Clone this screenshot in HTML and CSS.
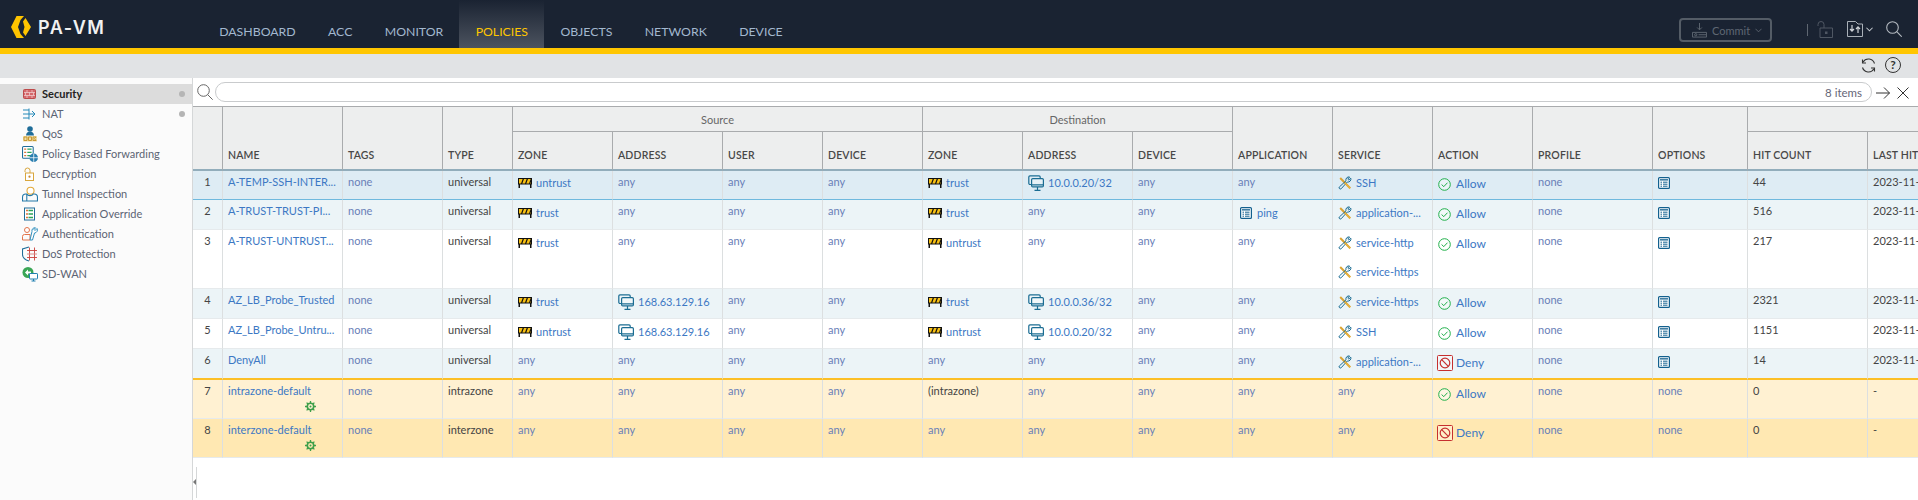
FILE: index.html
```html
<!DOCTYPE html>
<html>
<head>
    <title>PA-VM Policies</title>
    <link rel="stylesheet" href="styles.css">
</head>
<body>
    <svg class="defs" width="0" height="0">
        <defs>
            <symbol id="i-zone" viewBox="0 0 14 10">
                <rect x="0" y="0" width="14" height="6.500" fill="#111"/>
                <rect x="1" y="1" width="12" height="4.500" fill="#f8c013"/>
                <path d="M3.500 6l2-5.500M7.500 6l2-5.500M11.500 6l2-5.500" stroke="#111" stroke-width="1.200" fill="none"/>
                <path d="M.5 6h1.500v4H.5zM12 6h1.500v4H12z" fill="#111"/>
            </symbol>
            <symbol id="i-addr" viewBox="0 0 16 16">
                <g fill="none" stroke="#1b6d93" stroke-width="1.200">
                    <path d="M3.500 9.500H2a1.200 1.200 0 0 1-1.200-1.200V2A1.200 1.200 0 0 1 2 .8h9A1.200 1.200 0 0 1 12.200 2v1.500"/>
                    <rect x="3.600" y="3.600" width="11.800" height="8.300" rx="1.200" fill="#fff" fill-opacity=".25"/>
                    <path d="M3.600 9.800h11.800M9.500 12v3M6.500 15.300h6"/>
                </g>
            </symbol>
            <symbol id="i-list" viewBox="0 0 12 12">
                <rect x=".6" y=".6" width="10.800" height="10.800" rx="1" fill="#fff" stroke="#12608e" stroke-width="1.200"/>
                <path d="M2 2.200h8v1.300H2z" fill="#12608e"/>
                <path d="M2.500 5.200h1.500M5 5.200h4.500M2.500 7.200h1.500M5 7.200h4.500M2.500 9.200h1.500M5 9.200h4.500" stroke="#12608e" fill="none"/>
            </symbol>
            <symbol id="i-tool" viewBox="0 0 14 14">
                <path d="M2.200 2l10 10.300" stroke="#d9a332" stroke-width="2" fill="none"/>
                <path d="M12.800 2.200l-2 1.800-1-.9L11.600 1A3 3 0 0 0 8 4.800L1.300 11a1.300 1.300 0 0 0 1.800 1.800L9.300 6a3 3 0 0 0 3.500-3.800z" fill="none" stroke="#1b6d93" stroke-width="1"/>
                <path d="M7 7l5.200 5.300" stroke="#e8b23e" stroke-width="1.600" fill="none"/>
            </symbol>
            <symbol id="i-allow" viewBox="0 0 13 13">
                <circle cx="6.500" cy="6.500" r="5.800" fill="#fff" fill-opacity=".4" stroke="#21b04b" stroke-width="1"/>
                <path d="M3.700 6.500l2 2.200 3.800-4" fill="none" stroke="#21b04b" stroke-width="1"/>
            </symbol>
            <symbol id="i-deny" viewBox="0 0 16 16">
                <rect x=".5" y=".5" width="15" height="15" rx="1" fill="#fff" fill-opacity=".3" stroke="#c62f2f"/>
                <circle cx="8" cy="8" r="4.800" fill="none" stroke="#c62f2f" stroke-width="1.200"/>
                <path d="M4.700 4.700l6.600 6.600" stroke="#c62f2f" stroke-width="1.200"/>
            </symbol>
            <symbol id="i-gear" viewBox="0 0 11 11">
                <circle cx="5.500" cy="5.500" r="3.200" fill="none" stroke="#3e9f4a" stroke-width="1.600"/>
                <circle cx="5.500" cy="5.500" r="1" fill="#3e9f4a"/>
                <path d="M5.500 0v2M5.500 9v2M0 5.500h2M9 5.500h2M1.600 1.600L3 3M8 8l1.400 1.400M9.400 1.600L8 3M3 8L1.600 9.400" stroke="#3e9f4a" stroke-width="1.300"/>
            </symbol>
        </defs>
    </svg>

    <header class="topbar">
        <div class="brand">
            <svg class="brand-mark" viewBox="0 0 20 22"><path d="M5.500 0H13L9.500 4 7 11l2.500 7 3.500 4H5.500L0 11zM14.500 2L20 11l-5.500 9-2.500-3.500L13.500 11 12 5.500z" fill="#ffc400"/></svg>
            <span class="brand-name">PA-VM</span>
        </div>
        <nav class="tabs">
            <a class="tab">Dashboard</a>
            <a class="tab">ACC</a>
            <a class="tab">Monitor</a>
            <a class="tab tab-active">Policies</a>
            <a class="tab">Objects</a>
            <a class="tab">Network</a>
            <a class="tab">Device</a>
        </nav>
        <div class="top-tools">
            <div class="commit">
                <svg class="commit-icon" viewBox="0 0 16 16"><path d="M8 0v7M5.500 4.800L8 7.300l2.500-2.500M.5 10h15v5H.5z" fill="none" stroke="#5f6772"/><circle cx="4" cy="12.500" r="1.200" fill="none" stroke="#5f6772"/><path d="M7 12.500h8" stroke="#5f6772"/></svg>
                <span>Commit</span>
                <svg class="commit-chev" viewBox="0 0 8 5"><path d="M.5.500L4 4 7.500.5" fill="none" stroke="#5f6772"/></svg>
            </div>
            <span class="divider"></span>
            <svg class="tool-lock" viewBox="0 0 16 17"><path d="M1 5V3.500a3 3 0 0 1 6 0V7M3 7h12.500v9.500H3z" fill="none" stroke="#4f5763"/><rect x="8" y="10.500" width="2.500" height="2.500" fill="#4f5763"/></svg>
            <svg class="tool-folder" viewBox="0 0 16 16"><path d="M.5.500h8L11 3h4.500v12.500H.5z" fill="none" stroke="#a9b0b8"/><path d="M5 4v6M3 8l2 2.200L7 8M11 12V6M9 8l2-2.200L13 8" fill="none" stroke="#cfd3d8" stroke-width="1.200"/></svg>
            <svg class="tool-chev" viewBox="0 0 8 5"><path d="M.5.500L4 4 7.500.5" fill="none" stroke="#c4c9cf" stroke-width="1.200"/></svg>
            <svg class="tool-search" viewBox="0 0 16 16"><circle cx="6.500" cy="6.500" r="5.800" fill="none" stroke="#b4bac1" stroke-width="1.100"/><path d="M10.700 10.700l5 5" stroke="#b4bac1" stroke-width="1.100"/></svg>
        </div>
    </header>

    <div class="subbar">
        <svg class="sub-refresh" viewBox="0 0 15 15"><path d="M13.500 5.500A6.300 6.300 0 0 0 2 4.200M1.500 9.500A6.300 6.300 0 0 0 13 10.800" fill="none" stroke="#333" stroke-width="1.100"/><path d="M1.500 1.500V5h3.500M13.500 13.500V10H10" fill="none" stroke="#333" stroke-width="1.100"/></svg>
        <span class="sub-help">?</span>
    </div>

    <div class="main">
        <aside class="sidebar">
            <div class="side-item side-active">
                <svg class="side-icon" viewBox="0 0 13 10"><rect x=".5" y=".5" width="12" height="9" rx="1" fill="#d4686c" stroke="#bd4a4a"/><path d="M1 3.500h11M1 6.500h11M4 1v2.500M9 1v2.500M2.500 3.500v3M6.500 3.500v3M10.500 3.500v3M4 6.500V9M9 6.500V9" stroke="#f3d5d5" stroke-width=".7"/></svg>
                <span>Security</span><i class="side-dot"></i>
            </div>
            <div class="side-item">
                <svg class="side-icon" viewBox="0 0 13 12"><path d="M0 2h6M0 6h12M0 10h6M6 .5v11M9 3l3 3-3 3" fill="none" stroke="#2589b8"/></svg>
                <span>NAT</span><i class="side-dot"></i>
            </div>
            <div class="side-item">
                <svg class="side-icon side-icon-wide" viewBox="0 0 16 16"><circle cx="8" cy="3" r="2.800" fill="#1f6d99"/><path d="M4 9.500C4 7 6 5.500 8 5.500s4 1.500 4 4z" fill="#1f6d99"/><path d="M1 10h14v5.500H1z" fill="#f2dca6"/><path d="M2 11h3v3.500H2zM6.500 11h3v3.500h-3zM11 11h3l-1.500 1.700L14 14.500h-3z" fill="none" stroke="#c79a32"/></svg>
                <span>QoS</span>
            </div>
            <div class="side-item">
                <svg class="side-icon side-icon-wide" viewBox="0 0 15 15"><rect x=".5" y=".5" width="10" height="11" rx="1" fill="#fff" stroke="#1f6d99"/><path d="M2 3h2M2 6h2M2 9h2" stroke="#d9773e" stroke-width="1.200"/><path d="M5 3h4M5 6h4M5 9h4" stroke="#2ba35a" stroke-width="1.200"/><circle cx="11" cy="11" r="4" fill="#2b7fb0"/><path d="M11 7v8M7 11h8" stroke="#fff" stroke-width=".7"/></svg>
                <span>Policy Based Forwarding</span>
            </div>
            <div class="side-item">
                <svg class="side-icon" viewBox="0 0 13 14"><path d="M2 5V3.500a2.500 2.500 0 0 1 5 0V6" fill="none" stroke="#d9a63c"/><rect x="2.500" y="6" width="8" height="7.500" fill="#fff" stroke="#d9a63c"/><circle cx="6.500" cy="9.700" r="1.100" fill="#c8872c"/></svg>
                <span>Decryption</span>
            </div>
            <div class="side-item">
                <svg class="side-icon side-icon-wide" viewBox="0 0 15 14"><circle cx="8" cy="4" r="3.300" fill="#fff" stroke="#e3a93a"/><path d="M.5 13.500V10a3 3 0 0 1 3-3h1c1 2 5 2 6 0h1a3 3 0 0 1 3 3v3.500z" fill="none" stroke="#2278a8"/><path d="M4.500 7v6.500" stroke="#2278a8"/></svg>
                <span>Tunnel Inspection</span>
            </div>
            <div class="side-item">
                <svg class="side-icon" viewBox="0 0 13 13"><rect x="1.500" y=".5" width="10" height="12" fill="#fff" stroke="#1f6d99"/><path d="M3 3h2M3 6.500h2M3 10h2" stroke="#d9773e" stroke-width="1.400"/><path d="M5.500 3H10M5.500 6.500H10M5.500 10H10" stroke="#2ba35a" stroke-width="1.400"/></svg>
                <span>Application Override</span>
            </div>
            <div class="side-item">
                <svg class="side-icon side-icon-wide" viewBox="0 0 16 14"><circle cx="5" cy="3" r="2.500" fill="#fff" stroke="#e2744a"/><path d="M.5 13V9.500A2 2 0 0 1 2.500 7.500H8v5.500z" fill="none" stroke="#e2744a"/><path d="M15 1.500l-2 2-1-1 1.500-1.700A3 3 0 0 0 10 4.500L8 13h2.500l2-7A3 3 0 0 0 15 1.500z" fill="#fff" stroke="#2f8fbe"/></svg>
                <span>Authentication</span>
            </div>
            <div class="side-item">
                <svg class="side-icon side-icon-wide" viewBox="0 0 16 15"><path d="M7 .5L.5 2.500V8c0 3 3 5.500 6.500 6.500" fill="none" stroke="#1f6d99" stroke-width="1.100"/><path d="M5 4h10M5 11h10M7.500 1v13M12.500 1v13" stroke="#c9413c" stroke-width=".9" fill="none"/><path d="M5 7.500h10" stroke="#d98a86"/></svg>
                <span>DoS Protection</span>
            </div>
            <div class="side-item">
                <svg class="side-icon side-icon-wide" viewBox="0 0 16 15"><circle cx="6" cy="6" r="5.500" fill="#3aa655"/><path d="M6 3l-3 3 3 3V7h3V5H6z" fill="#fff"/><rect x="7.500" y="7" width="8" height="5.500" rx=".6" fill="#fff" stroke="#1f7fb0"/><path d="M11.500 12.500v2M9.500 14.500h4" stroke="#1f7fb0"/></svg>
                <span>SD-WAN</span>
            </div>
        </aside>

        <section class="content">
            <div class="searchbar">
                <svg class="search-icon" viewBox="0 0 16 16"><circle cx="6.500" cy="6.500" r="5.800" fill="none" stroke="#666"/><path d="M10.700 10.700l5 5" stroke="#666"/></svg>
                <div class="search-input"><span class="item-count">8 items</span></div>
                <svg class="search-go" viewBox="0 0 14 12"><path d="M0 6h13.500M8 .5L13.500 6 8 11.500" fill="none" stroke="#333"/></svg>
                <svg class="search-clear" viewBox="0 0 12 12"><path d="M.5.500l11 11M11.500.5l-11 11" stroke="#333"/></svg>
            </div>

            <div class="grid-wrap">
                <table class="grid">
                    <colgroup>
                        <col class="w30"><col class="w120"><col class="w100"><col class="w70">
                        <col class="w100"><col class="w110"><col class="w100"><col class="w100">
                        <col class="w100"><col class="w110"><col class="w100">
                        <col class="w100"><col class="w100"><col class="w100"><col class="w120">
                        <col class="w95"><col class="w120"><col class="w120">
                    </colgroup>
                    <thead>
                        <tr class="head-top">
                            <th rowspan="2"></th>
                            <th rowspan="2">Name</th>
                            <th rowspan="2">Tags</th>
                            <th rowspan="2">Type</th>
                            <th colspan="4" class="group">Source</th>
                            <th colspan="3" class="group">Destination</th>
                            <th rowspan="2">Application</th>
                            <th rowspan="2">Service</th>
                            <th rowspan="2">Action</th>
                            <th rowspan="2">Profile</th>
                            <th rowspan="2">Options</th>
                            <th colspan="2" class="group"></th>
                        </tr>
                        <tr class="head-sub">
                            <th>Zone</th><th>Address</th><th>User</th><th>Device</th>
                            <th>Zone</th><th>Address</th><th>Device</th>
                            <th>Hit Count</th><th>Last Hit</th>
                        </tr>
                    </thead>
                    <tbody>
                        <tr class="row-selected">
                            <td class="num">1</td><td><a>A-TEMP-SSH-INTER...</a></td><td class="val">none</td><td>universal</td>
                            <td><div class="ent"><svg class="ico-zone"><use href="#i-zone"/></svg><a>untrust</a></div></td>
                            <td class="val">any</td><td class="val">any</td><td class="val">any</td>
                            <td><div class="ent"><svg class="ico-zone"><use href="#i-zone"/></svg><a>trust</a></div></td>
                            <td><div class="ent"><svg class="ico-addr"><use href="#i-addr"/></svg><a>10.0.0.20/32</a></div></td>
                            <td class="val">any</td><td class="val">any</td>
                            <td><div class="ent"><svg class="ico-tool"><use href="#i-tool"/></svg><a>SSH</a></div></td>
                            <td><div class="ent act"><svg class="ico-allow"><use href="#i-allow"/></svg><a>Allow</a></div></td>
                            <td class="val">none</td>
                            <td><div class="ent"><svg class="ico-list"><use href="#i-list"/></svg></div></td>
                            <td>44</td><td>2023-11-</td>
                        </tr>
                        <tr class="row-alt">
                            <td class="num">2</td><td><a>A-TRUST-TRUST-PI...</a></td><td class="val">none</td><td>universal</td>
                            <td><div class="ent"><svg class="ico-zone"><use href="#i-zone"/></svg><a>trust</a></div></td>
                            <td class="val">any</td><td class="val">any</td><td class="val">any</td>
                            <td><div class="ent"><svg class="ico-zone"><use href="#i-zone"/></svg><a>trust</a></div></td>
                            <td class="val">any</td><td class="val">any</td>
                            <td><div class="ent"><svg class="ico-list ico-app"><use href="#i-list"/></svg><a>ping</a></div></td>
                            <td><div class="ent"><svg class="ico-tool"><use href="#i-tool"/></svg><a>application-...</a></div></td>
                            <td><div class="ent act"><svg class="ico-allow"><use href="#i-allow"/></svg><a>Allow</a></div></td>
                            <td class="val">none</td>
                            <td><div class="ent"><svg class="ico-list"><use href="#i-list"/></svg></div></td>
                            <td>516</td><td>2023-11-</td>
                        </tr>
                        <tr class="row-tall">
                            <td class="num">3</td><td><a>A-TRUST-UNTRUST...</a></td><td class="val">none</td><td>universal</td>
                            <td><div class="ent"><svg class="ico-zone"><use href="#i-zone"/></svg><a>trust</a></div></td>
                            <td class="val">any</td><td class="val">any</td><td class="val">any</td>
                            <td><div class="ent"><svg class="ico-zone"><use href="#i-zone"/></svg><a>untrust</a></div></td>
                            <td class="val">any</td><td class="val">any</td><td class="val">any</td>
                            <td>
                                <div class="ent ent-stack"><svg class="ico-tool"><use href="#i-tool"/></svg><a>service-http</a></div>
                                <div class="ent"><svg class="ico-tool"><use href="#i-tool"/></svg><a>service-https</a></div>
                            </td>
                            <td><div class="ent act"><svg class="ico-allow"><use href="#i-allow"/></svg><a>Allow</a></div></td>
                            <td class="val">none</td>
                            <td><div class="ent"><svg class="ico-list"><use href="#i-list"/></svg></div></td>
                            <td>217</td><td>2023-11-</td>
                        </tr>
                        <tr class="row-alt">
                            <td class="num">4</td><td><a>AZ_LB_Probe_Trusted</a></td><td class="val">none</td><td>universal</td>
                            <td><div class="ent"><svg class="ico-zone"><use href="#i-zone"/></svg><a>trust</a></div></td>
                            <td><div class="ent"><svg class="ico-addr"><use href="#i-addr"/></svg><a>168.63.129.16</a></div></td>
                            <td class="val">any</td><td class="val">any</td>
                            <td><div class="ent"><svg class="ico-zone"><use href="#i-zone"/></svg><a>trust</a></div></td>
                            <td><div class="ent"><svg class="ico-addr"><use href="#i-addr"/></svg><a>10.0.0.36/32</a></div></td>
                            <td class="val">any</td><td class="val">any</td>
                            <td><div class="ent"><svg class="ico-tool"><use href="#i-tool"/></svg><a>service-https</a></div></td>
                            <td><div class="ent act"><svg class="ico-allow"><use href="#i-allow"/></svg><a>Allow</a></div></td>
                            <td class="val">none</td>
                            <td><div class="ent"><svg class="ico-list"><use href="#i-list"/></svg></div></td>
                            <td>2321</td><td>2023-11-</td>
                        </tr>
                        <tr>
                            <td class="num">5</td><td><a>AZ_LB_Probe_Untru...</a></td><td class="val">none</td><td>universal</td>
                            <td><div class="ent"><svg class="ico-zone"><use href="#i-zone"/></svg><a>untrust</a></div></td>
                            <td><div class="ent"><svg class="ico-addr"><use href="#i-addr"/></svg><a>168.63.129.16</a></div></td>
                            <td class="val">any</td><td class="val">any</td>
                            <td><div class="ent"><svg class="ico-zone"><use href="#i-zone"/></svg><a>untrust</a></div></td>
                            <td><div class="ent"><svg class="ico-addr"><use href="#i-addr"/></svg><a>10.0.0.20/32</a></div></td>
                            <td class="val">any</td><td class="val">any</td>
                            <td><div class="ent"><svg class="ico-tool"><use href="#i-tool"/></svg><a>SSH</a></div></td>
                            <td><div class="ent act"><svg class="ico-allow"><use href="#i-allow"/></svg><a>Allow</a></div></td>
                            <td class="val">none</td>
                            <td><div class="ent"><svg class="ico-list"><use href="#i-list"/></svg></div></td>
                            <td>1151</td><td>2023-11-</td>
                        </tr>
                        <tr class="row-alt row-last">
                            <td class="num">6</td><td><a>DenyAll</a></td><td class="val">none</td><td>universal</td>
                            <td class="val">any</td><td class="val">any</td><td class="val">any</td><td class="val">any</td>
                            <td class="val">any</td><td class="val">any</td><td class="val">any</td><td class="val">any</td>
                            <td><div class="ent"><svg class="ico-tool"><use href="#i-tool"/></svg><a>application-...</a></div></td>
                            <td><div class="ent act"><svg class="ico-deny"><use href="#i-deny"/></svg><a>Deny</a></div></td>
                            <td class="val">none</td>
                            <td><div class="ent"><svg class="ico-list"><use href="#i-list"/></svg></div></td>
                            <td>14</td><td>2023-11-</td>
                        </tr>
                        <tr class="row-default row-intra">
                            <td class="num">7</td><td><a>intrazone-default</a><div class="gear-line"><svg class="ico-gear"><use href="#i-gear"/></svg></div></td><td class="val">none</td><td>intrazone</td>
                            <td class="val">any</td><td class="val">any</td><td class="val">any</td><td class="val">any</td>
                            <td>(intrazone)</td><td class="val">any</td><td class="val">any</td><td class="val">any</td>
                            <td class="val">any</td>
                            <td><div class="ent act"><svg class="ico-allow"><use href="#i-allow"/></svg><a>Allow</a></div></td>
                            <td class="val">none</td><td class="val">none</td>
                            <td>0</td><td>-</td>
                        </tr>
                        <tr class="row-default row-inter">
                            <td class="num">8</td><td><a>interzone-default</a><div class="gear-line"><svg class="ico-gear"><use href="#i-gear"/></svg></div></td><td class="val">none</td><td>interzone</td>
                            <td class="val">any</td><td class="val">any</td><td class="val">any</td><td class="val">any</td>
                            <td class="val">any</td><td class="val">any</td><td class="val">any</td><td class="val">any</td>
                            <td class="val">any</td>
                            <td><div class="ent act"><svg class="ico-deny"><use href="#i-deny"/></svg><a>Deny</a></div></td>
                            <td class="val">none</td><td class="val">none</td>
                            <td>0</td><td>-</td>
                        </tr>
                    </tbody>
                </table>
            </div>

            <div class="collapse-handle"><i class="collapse-arrow"></i></div>
        </section>
    </div>
</body>
</html>
```

FILE: styles.css
```css
* {
    box-sizing: border-box;
}

html, body {
    margin: 0;
    height: 500px;
    overflow: hidden;
}

body {
    font-family: Lato, "Open Sans", sans-serif;
    font-size: 11px;
    color: #444;
    background: #fff;
}

.defs {
    position: absolute;
}

/* top bar */
.topbar {
    display: flex;
    align-items: stretch;
    height: 54px;
    background: #1a2332;
    border-bottom: 6px solid #ffc600;
}

.brand {
    display: flex;
    align-items: center;
    width: 203px;
    padding: 6px 0 0 11px;
    gap: 7px;
}

.brand-mark {
    width: 20px;
    height: 22px;
}

.brand-name {
    font-family: Inter, Lato, sans-serif;
    font-size: 18px;
    font-weight: 600;
    letter-spacing: 1.500px;
    color: #f2f2f2;
}

.tabs {
    display: flex;
}

.tab {
    display: flex;
    align-items: center;
    padding: 15px 16.200px 0;
    font-size: 12.300px;
    text-transform: uppercase;
    color: #a3b8cf;
}

.tab-active {
    color: #ffc600;
    background: linear-gradient(#1a2332, #4c535f);
}

.top-tools {
    display: flex;
    align-items: center;
    margin-left: auto;
    padding-right: 16px;
}

.commit {
    display: flex;
    align-items: center;
    width: 93px;
    height: 24px;
    margin-top: 12px;
    padding-left: 11px;
    border: 2px solid #545c66;
    border-radius: 4px;
    font-size: 11px;
    color: #5f6772;
}

.commit-icon {
    width: 15px;
    height: 15px;
    margin-right: 5px;
}

.commit-chev {
    width: 7px;
    height: 5px;
    margin-left: 5px;
}

.divider {
    width: 1px;
    height: 12px;
    margin: 12px 9px 0 35px;
    background: #5f6772;
}

.tool-lock {
    width: 16px;
    height: 17px;
    margin-top: 10px;
}

.tool-folder {
    width: 16px;
    height: 16px;
    margin: 9px 3px 0 14px;
}

.tool-chev {
    width: 7px;
    height: 5px;
    margin-top: 10px;
}

.tool-search {
    width: 16px;
    height: 16px;
    margin: 10px 0 0 13px;
}

/* second bar */
.subbar {
    display: flex;
    align-items: center;
    justify-content: flex-end;
    height: 24px;
    padding: 0 17px 2px 0;
    gap: 9px;
    background: #e1e3e5;
}

.sub-refresh {
    width: 15px;
    height: 15px;
}

.sub-help {
    width: 16px;
    height: 16px;
    border: 1px solid #333;
    border-radius: 50%;
    font-size: 12px;
    font-weight: 700;
    line-height: 14px;
    text-align: center;
    color: #333;
}

.main {
    display: flex;
    height: 422px;
}

/* left tree */
.sidebar {
    flex: 0 0 193px;
    padding-top: 6px;
    background: #fbfbfb;
    border-right: 1px solid #d5d7d8;
}

.side-item {
    position: relative;
    display: flex;
    align-items: center;
    height: 20px;
    padding: 0 0 2px 42px;
    font-size: 11px;
    color: #5c6474;
}

.side-active {
    background: #dcdcdc;
    font-weight: 700;
    color: #222;
}

.side-icon {
    position: absolute;
    left: 23px;
    top: 3px;
    width: 13px;
    height: 14px;
}

.side-icon-wide {
    left: 22px;
    top: 2px;
    width: 16px;
    height: 16px;
}

.side-dot {
    position: absolute;
    right: 7px;
    top: 7px;
    width: 6px;
    height: 6px;
    border-radius: 50%;
    background: #b5b5b5;
}

/* search row */
.content {
    position: relative;
    flex: 1;
    min-width: 0;
}

.searchbar {
    display: flex;
    align-items: center;
    height: 28px;
    padding: 0 9px 0 4px;
    background: #fff;
}

.search-icon {
    flex: none;
    width: 16px;
    height: 16px;
    margin-right: 2px;
}

.search-input {
    flex: 1;
    display: flex;
    align-items: center;
    justify-content: flex-end;
    height: 20px;
    padding-right: 9px;
    border: 1px solid #c9cbcd;
    border-radius: 10px;
    font-size: 11.500px;
    color: #667;
}

.search-go {
    flex: none;
    width: 14px;
    height: 12px;
    margin: 2px 7px 0 4px;
}

.search-clear {
    flex: none;
    width: 12px;
    height: 12px;
    margin-top: 2px;
}

/* rule table */
.grid-wrap {
    overflow: hidden;
}

.grid {
    table-layout: fixed;
    width: 1795px;
    border-collapse: separate;
    border-spacing: 0;
    font-size: 11px;
}

.w30 { width: 30px; }
.w70 { width: 70px; }
.w95 { width: 95px; }
.w100 { width: 100px; }
.w110 { width: 110px; }
.w120 { width: 120px; }

.grid th {
    padding: 0 5px 8px;
    background: #edeeee;
    border-right: 1px solid #a9abad;
    border-bottom: 2px solid #92adbb;
    vertical-align: bottom;
    text-align: left;
    text-transform: uppercase;
    font-size: 10.500px;
    font-weight: 600;
    letter-spacing: .150px;
    color: #484848;
    white-space: nowrap;
}

.head-top th {
    border-top: 1px solid #a9abad;
}

.head-top {
    height: 26px;
}

.head-sub {
    height: 39px;
}

.grid th.group {
    padding: 0 5px;
    border-bottom: 1px solid #a9abad;
    vertical-align: middle;
    text-align: center;
    text-transform: none;
    font-weight: 400;
    font-size: 11px;
    letter-spacing: 0;
    color: #666;
}

.grid td {
    height: 30px;
    padding: 4px 5px 0;
    border-right: 1px solid #dcdfe0;
    border-bottom: 1px solid #e6eaec;
    vertical-align: top;
    line-height: 14px;
    white-space: nowrap;
    overflow: hidden;
}

.grid a {
    color: #3c78c4;
}

.grid .val {
    color: #6a80b8;
}

.grid .num {
    padding-left: 0;
    padding-right: 0;
    text-align: center;
}

.row-selected td {
    height: 29px;
    background: #deecf4;
    border-bottom-color: #6fb9de;
}

.row-alt td {
    background: #ecf4f7;
}

.row-tall td {
    height: 59px;
}

.row-last td {
    height: 31px;
    border-bottom: 2px solid #fcbf26;
}

.row-default td {
    height: 39px;
}

.row-intra td {
    background: #fff1d2;
}

.row-inter td {
    background: #ffe8b2;
}

.ent {
    display: flex;
    align-items: center;
    height: 18px;
    gap: 4px;
}

.row-selected .ent {
    margin-top: -1px;
}

.ent-stack {
    margin-bottom: 11px;
}

.act {
    height: 20px;
    gap: 5px;
    font-size: 12px;
}

.ico-zone {
    flex: none;
    width: 14px;
    height: 10px;
}

.ico-addr {
    flex: none;
    width: 16px;
    height: 16px;
}

.ico-list {
    flex: none;
    width: 12px;
    height: 12px;
}

.ico-app {
    margin: 0 1px 0 2px;
}

.ico-tool {
    flex: none;
    width: 14px;
    height: 14px;
}

.ico-allow {
    flex: none;
    width: 13px;
    height: 13px;
}

.ico-deny {
    flex: none;
    width: 16px;
    height: 16px;
    margin-left: -1px;
    margin-right: -2px;
}

.gear-line {
    display: flex;
    justify-content: flex-end;
    padding-right: 21px;
    height: 11px;
    margin-top: 3px;
}

.ico-gear {
    width: 11px;
    height: 11px;
}

/* sidebar collapse handle */
.collapse-handle {
    position: absolute;
    left: 0;
    bottom: 2px;
    width: 4px;
    height: 31px;
    border-right: 1px solid #d5d7d8;
}

.collapse-arrow {
    position: absolute;
    left: 0;
    top: 12px;
    border: 3px solid transparent;
    border-left-width: 0;
    border-right: 3px solid #777;
}
```
